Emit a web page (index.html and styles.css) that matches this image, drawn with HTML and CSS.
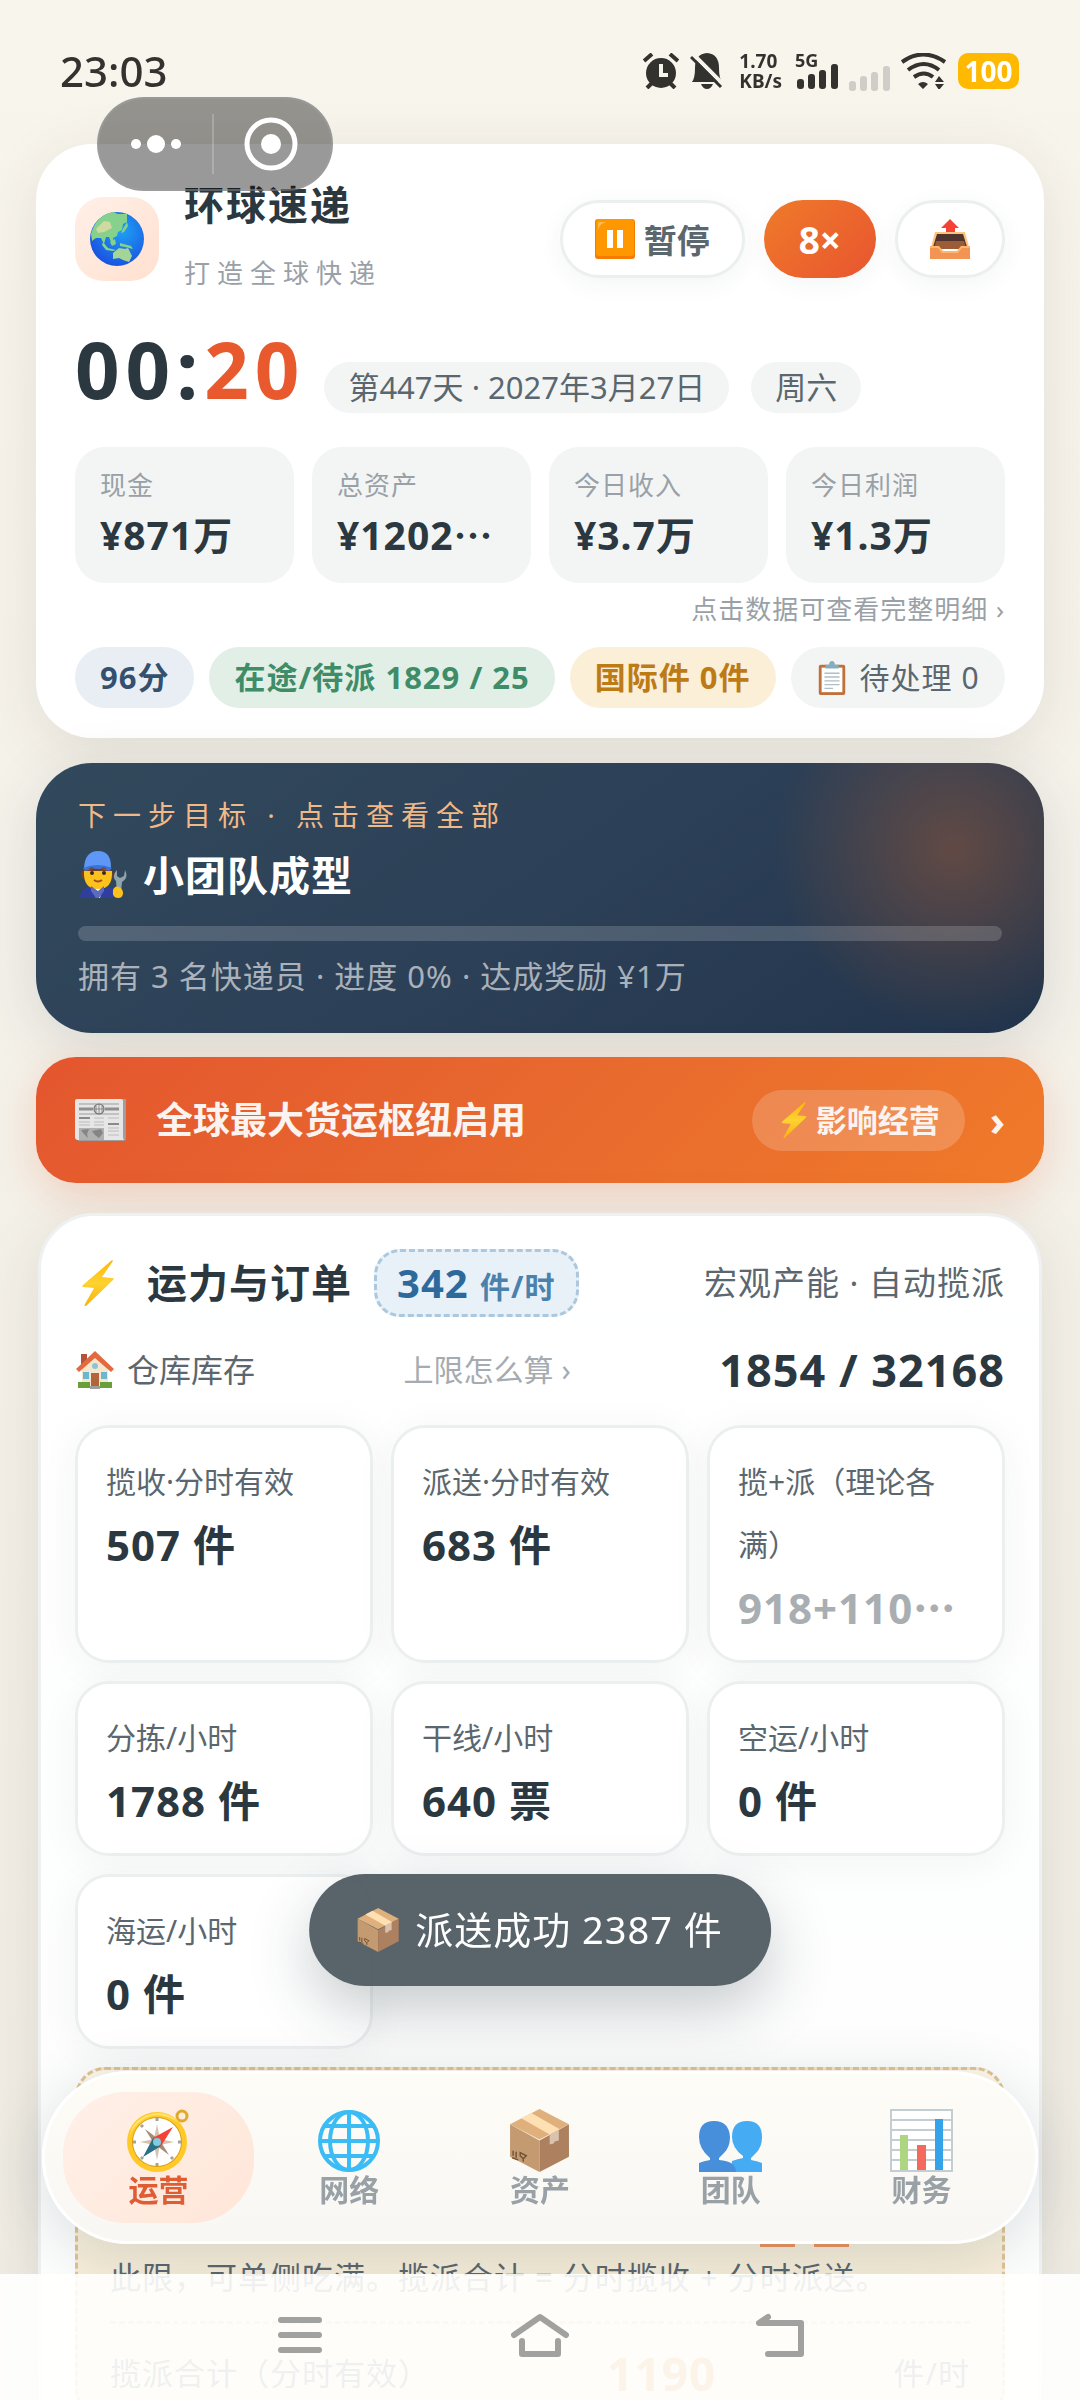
FILE: index.html
```html
<!DOCTYPE html>
<html lang="zh-CN">
<head>
  <meta charset="UTF-8" />
  <meta name="viewport" content="width=device-width, initial-scale=1.0"/>
  <title>环球速递</title>
  <link rel="stylesheet" href="styles.css">
</head>
<body>

  <!-- Icon sprite -->
  <svg class="sprite" aria-hidden="true">
    <defs>
      <radialGradient id="sea" cx="60%" cy="35%" r="70%">
        <stop offset="0" stop-color="#1ea0f5"/><stop offset="1" stop-color="#1a4fe0"/>
      </radialGradient>
      <linearGradient id="bolt" x1="0" y1="0" x2="0" y2="1">
        <stop offset="0" stop-color="#feb804"/><stop offset=".5" stop-color="#fdd231"/><stop offset="1" stop-color="#f9b308"/>
      </linearGradient>
    </defs>
    <symbol id="i-globe" viewBox="0 0 54 54">
      <circle cx="27" cy="27" r="27" fill="url(#sea)"/>
      <path fill="#86d18b" d="M1 22C4 10 12 2 23 0l5 2h9v8l-4 2-1 6-4 2-1 4-4 2 1 5-3-1-2-5-3 0-2 7-3-6-5 0-4 3z"/>
      <path fill="#cfd9a0" d="M6 17l8-8 6 1 2 6-8 4-6 1z"/>
      <path fill="#86d18b" d="M34 15l3-5 1 4-4 6-3 1zM13 30l5 6 8 2-3 1-7-1-4-5zM20 30l5-3 1 5-4 2zM30 31l11 3 2 3-8-2-5-1z"/>
      <path fill="#a5d596" d="M23 41l6-5 6 1 3-1 4 8-3 6-6-2-4-2-6 1z"/>
    </symbol>
    <symbol id="i-pause" viewBox="0 0 40 40">
      <rect width="40" height="40" rx="3" fill="#f57c00"/>
      <rect width="38" height="37" x="1" rx="3" fill="#ff9800"/>
      <path d="M3 11V5q0-2 2-2h6q-6 1-8 8z" fill="#ffbd52"/>
      <path d="M12 11h6v18h-6zM22 11h6v18h-6z" fill="#fff"/>
    </symbol>
    <symbol id="i-outbox" viewBox="0 0 40 40">
      <path d="M20 0l9 9h-4v5h-9V9h-5z" fill="#f44336"/>
      <path d="M5 13h30l4 15H1z" fill="#ffc27d"/>
      <path d="M7 15h26l4 13H3z" fill="#4e342e"/>
      <path d="M6 22h28l2 8H4z" fill="#9c5c35"/>
      <path d="M0 27h9l4 5h14l4-5h9v13H0z" fill="#ffb56b"/>
      <path d="M0 29h8l4 5h16l4-5h8v11H0z" fill="#f29454"/>
    </symbol>
    <symbol id="i-clipboard" viewBox="0 0 32 36">
      <rect x="2" y="4" width="28" height="32" rx="2" fill="#c0703a"/>
      <path d="M5 7h22v26H5z" fill="#fff"/>
      <path d="M9 8V4h4q0-4 3-4t3 4h4v4z" fill="#82aec0"/>
      <path d="M8 13h16M8 17h16M8 21h16M8 25h16M8 29h9" stroke="#b0bec5" stroke-width="1.5"/>
    </symbol>
    <symbol id="i-mechanic" viewBox="0 0 48 48">
      <path d="M4 19q-4 5 1 9l27 1q4-5 0-11z" fill="#7b3f1d"/>
      <path d="M1 47q0-10 12-12h12q14 1 16 12z" fill="#303f9f"/>
      <path d="M14 35h10l-3 12h-4z" fill="#fff"/>
      <path d="M5 20q-1 18 14 18t14-18z" fill="#fcc21b"/>
      <path d="M12 35l7 5 6-5 0 5-5 7h-3l-5-7z" fill="#5c6bc0"/>
      <path d="M5 17Q6 0 19 0t13 16l-2 3q-11-3-24-1z" fill="#5e97f6"/>
      <path d="M4 17q15-6 29 0l-3 3q-12-5-24 0z" fill="#3a72d8"/>
      <circle cx="13" cy="22" r="2" fill="#3e2723"/><circle cx="25" cy="22" r="2" fill="#3e2723"/>
      <path d="M10 18q3-2 5 0M22 18q3-2 5 0" stroke="#6d4c41" stroke-width="1.5" fill="none"/>
      <path d="M15 29q4 3 8 0" stroke="#a24d27" stroke-width="2" fill="none"/>
      <path d="M38 19v6l3 2 4-2 1-6q4 8-3 12l-1 10h-4l-1-11q-5-5 1-11z" fill="#90a4ae"/>
      <path d="M34 39q2-5 6-3 4 2 4 6 0 5-5 5-6 0-5-8z" fill="#fcc21b"/>
    </symbol>
    <symbol id="i-news" viewBox="0 0 52 42">
      <path d="M3 0h48v39q0 3-3 3H3z" fill="#9e9e9e"/>
      <path d="M2 0h44q2 0 2 2v36q0 3 2 3H3q-3 0-3-3V2q0-2 2-2z" fill="#e6e6e6"/>
      <path d="M4 5h40M4 15h40" stroke="#9b9b9b" stroke-width="1"/>
      <path d="M4 10h14M30 10h14" stroke="#8f8f8f" stroke-width="3"/>
      <circle cx="24" cy="10" r="5" fill="none" stroke="#777" stroke-width="1.2"/>
      <path d="M19 10h10M24 5v10M21 7v6M27 7v6" stroke="#777" stroke-width=".8"/>
      <path d="M4 19h11M33 25h11" stroke="#8a8a8a" stroke-width="2"/>
      <path d="M19 19h10M19 23h10M4 23h11M4 26h11M19 26h10M33 19h11M33 29h11M33 32h11M33 36h11" stroke="#bbb" stroke-width="1.2"/>
      <path d="M4 29h25v12H4z" fill="#b0b0b0"/>
      <path d="M6 31l8-1-2 5 1 4-4-4zM17 32l9-2 2 4-4 5-4-3z" fill="#858585"/>
    </symbol>
    <symbol id="i-bolt" viewBox="0 0 34 46">
      <path d="M31 0L2 25q-2 2 1 2l10 1L4 44q-1 3 1 2l27-26q2-2-1-2l-10-1L32 1z" fill="url(#bolt)"/>
    </symbol>
    <symbol id="i-house" viewBox="0 0 38 38">
      <path d="M6 15L19 5l13 10v21H6z" fill="#f5e6cf"/>
      <path d="M5 3h6v10H5z" fill="#b5523a"/>
      <path d="M19 0L0 18l3 3L19 7l16 14 3-3z" fill="#e4693f"/>
      <path d="M15 22h8v13h-8z" fill="#b1653b"/>
      <path d="M7 21h6v7H7zM25 21h6v7h-6z" fill="#6cb7cf"/>
      <circle cx="19" cy="15" r="3" fill="#8fc3d0"/>
      <path d="M2 31h12v6H2zM24 31h12v6H24z" fill="#689f38"/>
      <path d="M14 35h10v3H14z" fill="#9e9e9e"/>
    </symbol>
    <symbol id="i-box" viewBox="0 0 58 62">
      <path d="M0 15l29 16v31L0 47z" fill="#c49a70"/>
      <path d="M58 15L29 31v31l29-15z" fill="#ad8060"/>
      <path d="M29 0L0 15l29 15 29-15z" fill="#dfb07c"/>
      <path d="M21 4L11 9l28 16 10-5z" fill="#ffe0b2"/>
      <path d="M39 25l9-5v11l-4 1-1 2-4 1z" fill="#d9c3ae"/>
      <path d="M3 41v5M6 42v6M2 48l6 2M10 43l6 3-3 3-3-3zM13 49v3" stroke="#6f5238" stroke-width="1.4" fill="none"/>
    </symbol>
    <symbol id="i-compass" viewBox="0 0 63 63">
      <circle cx="55" cy="7" r="5" fill="none" stroke="#e0a92a" stroke-width="3"/>
      <circle cx="30" cy="33" r="30" fill="#ffca28"/>
      <path d="M2 31Q4 7 30 4q14 0 21 9-20-12-34-3T2 31z" fill="#ffe36c"/>
      <circle cx="30" cy="33" r="25" fill="#d99f16"/>
      <circle cx="30" cy="33" r="24" fill="#fff"/>
      <path d="M30 15l3 15 14 3-14 3-3 15-3-15-14-3 14-3z" fill="#d8c2ae"/>
      <path d="M18 20l12 9 4 4 8 13-12-9-4-4z" fill="#a68a76"/>
      <path d="M46 18L34 37l-8-8z" fill="#f44336"/>
      <path d="M16 48l10-19 8 8z" fill="#2a6f86"/>
      <circle cx="30" cy="33" r="4" fill="#80cbdc"/>
      <path d="M30 9v3M30 54v3M6 33h3M51 33h3M14 16l2 2M44 48l2 2M14 50l2-2" stroke="#a9a09a" stroke-width="3"/>
    </symbol>
    <symbol id="i-web" viewBox="0 0 63 63">
      <g fill="none" stroke="#3bbcf5" stroke-width="4">
        <circle cx="31" cy="32" r="29"/>
        <ellipse cx="31" cy="32" rx="19" ry="29"/>
        <path d="M31 3v58M2 32h58M7 17h48M7 47h48"/>
      </g>
    </symbol>
    <symbol id="i-team" viewBox="0 0 63 63">
      <path d="M33 28q0-16 15-16t15 16q0 10-6 16-3 3-5 5v2q6 1 11 3v9H32l1-11q6-2 11-3v-2q-11-8-11-19z" fill="#45abf3"/>
      <path d="M0 28q0-16 15-16t16 16q0 10-6 16-3 3-5 5v2q17 1 17 12H0v-9q5-2 11-3v-2Q0 40 0 28z" fill="#478fdb"/>
    </symbol>
    <symbol id="i-chart" viewBox="0 0 63 63">
      <path d="M1 1h61v61H1z" fill="#fff" stroke="#c3cdd2" stroke-width="2"/>
      <path d="M1 11h61M1 21h61M1 31h61M1 41h61M1 51h61" stroke="#c3cdd2" stroke-width="2"/>
      <path d="M10 26h8v35h-8z" fill="#aed581"/>
      <path d="M27 36h9v25h-9z" fill="#f5695d"/>
      <path d="M45 10h8v51h-8z" fill="#34a3ea"/>
    </symbol>
  </svg>

  <!-- Phone status bar -->
  <div class="status-bar">
    <span class="status-time">23:03</span>
    <div class="status-icons">
      <svg width="36" height="36" viewBox="0 0 36 36" fill="#33322f">
        <circle cx="18" cy="20" r="15"/>
        <path d="M1 8l8-7M35 8l-8-7M4 35l6-6M32 35l-6-6" stroke="#33322f" stroke-width="4"/>
        <path d="M18 11v11h7" fill="none" stroke="#f7f4ec" stroke-width="4"/>
      </svg>
      <svg width="34" height="36" viewBox="0 0 34 36">
        <path d="M2 29q3-4 3-14Q5 1 17 0q12 1 12 15 0 10 3 14zM11 31h12q-2 5-6 5t-6-5z" fill="#33322f"/>
        <path d="M3 1l31 31" stroke="#f7f4ec" stroke-width="4"/>
        <path d="M1 4l30 30" stroke="#33322f" stroke-width="3"/>
      </svg>
      <div class="net-speed"><span>1.70</span><span>KB/s</span></div>
      <div class="signal-5g">
        <span>5G</span>
        <svg width="41" height="25" viewBox="0 0 41 25" fill="#33322f">
          <rect y="15" width="7" height="10" rx="3"/><rect x="11" y="10" width="7" height="15" rx="3"/><rect x="22" y="6" width="7" height="19" rx="3"/><rect x="34" width="7" height="25" rx="3"/>
        </svg>
      </div>
      <svg class="signal-off" width="41" height="25" viewBox="0 0 41 25" fill="#d0cdc8">
        <rect y="15" width="7" height="10" rx="3"/><rect x="11" y="10" width="7" height="15" rx="3"/><rect x="22" y="6" width="7" height="19" rx="3"/><rect x="34" width="7" height="25" rx="3"/>
      </svg>
      <svg width="46" height="36" viewBox="0 0 46 36" fill="none" stroke="#33322f" stroke-width="4">
        <path d="M1 9q21-15 43 0M7 17q16-12 31 0M13 24q10-7 19 0"/>
        <path d="M17 31q5-4 10 0l-5 5zM34 29l4-6 5 6zM34 31l4 6 5-6z" fill="#33322f" stroke="none"/>
      </svg>
      <span class="battery">100</span>
    </div>
  </div>

  <!-- Mini program capsule -->
  <div class="capsule">
    <button class="capsule-button" aria-label="更多">
      <svg width="50" height="20" viewBox="0 0 50 20" fill="#fff"><circle cx="5" cy="10" r="5"/><circle cx="25" cy="10" r="9"/><circle cx="45" cy="10" r="5"/></svg>
    </button>
    <button class="capsule-button" aria-label="关闭">
      <svg width="54" height="54" viewBox="0 0 54 54"><circle cx="27" cy="27" r="24" fill="none" stroke="#fff" stroke-width="5"/><circle cx="27" cy="27" r="10" fill="#fff"/></svg>
    </button>
  </div>

  <main class="app">

    <!-- Header card -->
    <section class="header-card">
      <div class="brand-row">
        <div class="logo"><svg width="54" height="54"><use href="#i-globe"/></svg></div>
        <div class="brand">
          <h1>环球速递</h1>
          <p>打造全球快递</p>
        </div>
        <div class="controls">
          <button class="control"><svg width="40" height="40"><use href="#i-pause"/></svg>暂停</button>
          <button class="control speed">8×</button>
          <button class="control" aria-label="导出"><svg width="40" height="40"><use href="#i-outbox"/></svg></button>
        </div>
      </div>

      <div class="time-row">
        <div class="clock">00:<span>20</span></div>
        <span class="date-pill">第447天 · 2027年3月27日</span>
        <span class="date-pill">周六</span>
      </div>

      <div class="stats">
        <div class="stat"><span>现金</span><strong>¥871万</strong></div>
        <div class="stat"><span>总资产</span><strong>¥1202<span class="dots">…</span></strong></div>
        <div class="stat"><span>今日收入</span><strong>¥3.7万</strong></div>
        <div class="stat"><span>今日利润</span><strong>¥1.3万</strong></div>
      </div>
      <a class="stats-hint" href="#">点击数据可查看完整明细 ›</a>

      <div class="chips">
        <span class="chip blue">96分</span>
        <span class="chip green">在途/待派 1829 / 25</span>
        <span class="chip yellow">国际件 0件</span>
        <span class="chip grey"><svg width="32" height="34"><use href="#i-clipboard"/></svg>待处理 0</span>
      </div>
    </section>

    <!-- Next goal -->
    <section class="goal-card">
      <p class="goal-label">下一步目标 · 点击查看全部</p>
      <h2><svg width="50" height="48"><use href="#i-mechanic"/></svg>小团队成型</h2>
      <div class="goal-bar"></div>
      <p class="goal-info">拥有 3 名快递员 · 进度 0% · 达成奖励 ¥1万</p>
    </section>

    <!-- News -->
    <a class="news" href="#">
      <svg width="52" height="42"><use href="#i-news"/></svg>
      <span class="news-title">全球最大货运枢纽启用</span>
      <span class="news-tag"><svg width="34" height="36"><use href="#i-bolt"/></svg>影响经营</span>
      <span class="news-arrow">›</span>
    </a>

    <!-- Capacity -->
    <section class="panel">
      <div class="panel-head">
        <svg width="46" height="46"><use href="#i-bolt"/></svg>
        <h2>运力与订单</h2>
        <span class="rate">342 <small>件/时</small></span>
        <span class="panel-note">宏观产能 · 自动揽派</span>
      </div>
      <div class="stock">
        <span class="stock-name"><svg width="40" height="38"><use href="#i-house"/></svg>仓库库存</span>
        <a href="#">上限怎么算 ›</a>
        <strong>1854 / 32168</strong>
      </div>

      <div class="metrics">
        <div class="metric"><span>揽收·分时有效</span><strong>507 件</strong></div>
        <div class="metric"><span>派送·分时有效</span><strong>683 件</strong></div>
        <div class="metric muted"><span>揽+派（理论各满）</span><strong>918+110<b class="dots">…</b></strong></div>
        <div class="metric"><span>分拣/小时</span><strong>1788 件</strong></div>
        <div class="metric"><span>干线/小时</span><strong>640 票</strong></div>
        <div class="metric"><span>空运/小时</span><strong>0 件</strong></div>
        <div class="metric"><span>海运/小时</span><strong>0 件</strong></div>
      </div>

      <div class="notice">
        <div class="notice-marks"><i></i><i></i></div>
        <p>此限，可单侧吃满。揽派合计 = 分时揽收 + 分时派送。</p>
        <div class="total">
          <span>揽派合计（分时有效）</span>
          <strong>1190</strong>
          <span>件/时</span>
        </div>
      </div>
    </section>
  </main>

  <div class="toast"><svg width="42" height="44"><use href="#i-box"/></svg>派送成功 2387 件</div>

  <!-- Bottom tabs -->
  <nav class="tabs">
    <a class="tab active" href="#"><svg width="63" height="63"><use href="#i-compass"/></svg>运营</a>
    <a class="tab" href="#"><svg width="63" height="63"><use href="#i-web"/></svg>网络</a>
    <a class="tab" href="#"><svg width="63" height="63"><use href="#i-box"/></svg>资产</a>
    <a class="tab" href="#"><svg width="63" height="63"><use href="#i-team"/></svg>团队</a>
    <a class="tab" href="#"><svg width="63" height="63"><use href="#i-chart"/></svg>财务</a>
  </nav>

  <!-- Phone navigation -->
  <div class="system-nav">
    <button aria-label="最近任务"><svg width="46" height="36" viewBox="0 0 46 36" stroke="#a1a1a0" stroke-width="6" stroke-linecap="round"><path d="M4 3h38M4 18h38M4 33h38"/></svg></button>
    <button aria-label="主屏幕"><svg width="58" height="44" viewBox="0 0 58 44" fill="none" stroke="#a1a1a0" stroke-width="6" stroke-linecap="round" stroke-linejoin="round"><path d="M3 22L29 4l26 18M11 28v13h36V28"/></svg></button>
    <button aria-label="返回"><svg width="50" height="44" viewBox="0 0 50 44" fill="none" stroke="#a1a1a0" stroke-width="6" stroke-linecap="round" stroke-linejoin="round"><path d="M13 4L4 10h42v31H13"/></svg></button>
  </div>

</body>
</html>
```
FILE: styles.css
```css
* {
  box-sizing: border-box;
}

body {
  margin: 0;
  height: 100vh;
  overflow: hidden;
  font-family: "Noto Sans", "Noto Sans CJK SC", sans-serif;
  line-height: 1.4;
  color: #2b3840;
  background: linear-gradient(#f8f5ed, #efece4);
}

h1, h2, p {
  margin: 0;
}

a {
  text-decoration: none;
}

button {
  border: none;
  background: none;
  padding: 0;
  font-family: inherit;
}

svg {
  flex-shrink: 0;
}

.sprite {
  position: absolute;
  width: 0;
  height: 0;
}

/* status bar */
.status-bar {
  position: fixed;
  top: 0;
  left: 0;
  right: 0;
  display: flex;
  justify-content: space-between;
  align-items: center;
  height: 142px;
  padding: 0 61px 0 60px;
  color: #33322f;
}

.status-time {
  font-size: 42px;
  font-weight: 500;
}

.status-icons {
  display: flex;
  align-items: center;
  gap: 11px;
}

.net-speed {
  display: flex;
  flex-direction: column;
  margin: 0 4px;
  font-size: 19px;
  font-weight: 700;
  line-height: 20px;
}

.signal-5g {
  position: relative;
  display: flex;
  align-items: flex-end;
  height: 36px;
}

.signal-5g span {
  position: absolute;
  top: 0;
  left: -2px;
  font-size: 18px;
  font-weight: 700;
  line-height: 14px;
}

.signal-off {
  align-self: flex-end;
}

.battery {
  width: 61px;
  border-radius: 10px;
  background: #ffb900;
  color: white;
  font-size: 28px;
  font-weight: 700;
  line-height: 36px;
  text-align: center;
}

/* capsule */
.capsule {
  position: fixed;
  top: 97px;
  left: 97px;
  z-index: 2;
  display: flex;
  align-items: center;
  width: 236px;
  height: 94px;
  padding-right: 4px;
  border: 2px solid rgba(160, 160, 160, 0.5);
  border-radius: 47px;
  background: rgba(0, 0, 0, 0.4);
}

.capsule-button {
  flex: 1;
  display: flex;
  justify-content: center;
  align-items: center;
  height: 60px;
}

.capsule-button + .capsule-button {
  border-left: 2px solid rgba(255, 255, 255, 0.2);
}

.app {
  padding: 144px 36px 0;
}

/* header card */
.header-card {
  padding: 27px 39px 30px;
  border-radius: 56px;
  background: white;
  box-shadow: 0 12px 60px rgba(60, 50, 30, 0.1);
}

.brand-row {
  display: flex;
  align-items: center;
}

.logo {
  display: flex;
  justify-content: center;
  align-items: center;
  width: 84px;
  height: 84px;
  border-radius: 28px;
  background: linear-gradient(135deg, #fff0e8, #ffe0cf);
}

.brand {
  margin-left: 25px;
  line-height: 68px;
}

.brand h1 {
  font-size: 40px;
  letter-spacing: 2px;
}

.brand p {
  color: #99a1a7;
  font-size: 26px;
  letter-spacing: 7px;
}

.controls {
  display: flex;
  gap: 19px;
  margin-left: auto;
}

.control {
  display: flex;
  align-items: center;
  gap: 9px;
  height: 78px;
  padding: 0 32px;
  border: 3px solid #ecefef;
  border-radius: 39px;
  background: white;
  box-shadow: 0 6px 24px rgba(40, 56, 64, 0.05);
  color: #5b676e;
  font-size: 33px;
  font-weight: 700;
}

.control.speed {
  padding: 0 35px;
  border: none;
  background: linear-gradient(135deg, #ef7a2a, #e8552f);
  color: white;
  font-size: 37px;
}

.time-row {
  display: flex;
  align-items: baseline;
  margin-top: 12px;
}

.clock {
  margin-right: 19px;
  font-size: 78px;
  font-weight: 700;
  line-height: 100px;
  letter-spacing: 6px;
}

.clock span {
  color: #e85a2e;
}

.date-pill {
  margin-right: 22px;
  padding: 0 24px;
  border-radius: 26px;
  background: #f3f5f5;
  color: #5b676e;
  font-size: 31px;
  line-height: 51px;
}

.stats {
  display: grid;
  grid-template-columns: repeat(4, 1fr);
  gap: 18px;
  margin-top: 28px;
}

.stat {
  display: flex;
  flex-direction: column;
  height: 136px;
  padding: 12px 25px;
  border-radius: 30px;
  background: #f3f5f5;
}

.stat > span {
  color: #99a1a7;
  font-size: 26px;
  line-height: 52px;
  letter-spacing: 1px;
}

.stat strong {
  font-size: 39px;
  line-height: 48px;
  letter-spacing: 1px;
}

/* centred ellipsis comes from the CJK face */
.dots {
  font-family: "Noto Sans CJK SC", sans-serif;
  line-height: 1;
}

.stats-hint {
  display: block;
  color: #99a1a7;
  font-size: 26px;
  line-height: 52px;
  letter-spacing: 1px;
  text-align: right;
}

.chips {
  display: flex;
  gap: 15px;
  margin-top: 12px;
}

.chip {
  display: flex;
  align-items: center;
  gap: 12px;
  padding: 0 25px;
  border-radius: 31px;
  font-size: 31px;
  font-weight: 700;
  line-height: 61px;
  letter-spacing: 1px;
  white-space: nowrap;
}

.chip.blue {
  background: #e9eef4;
  color: #34506e;
}

.chip.green {
  background: #e1efe6;
  color: #3f8c68;
}

.chip.yellow {
  background: #fbefd8;
  color: #bd7b16;
}

.chip.grey {
  background: #f3f5f5;
  color: #5b676e;
  font-size: 30px;
  font-weight: 400;
}

/* goal */
.goal-card {
  margin-top: 25px;
  padding: 26px 42px 32px;
  border-radius: 56px;
  background:
    radial-gradient(circle at 918px 86px, rgba(232, 110, 40, 0.3), rgba(232, 110, 40, 0) 180px),
    linear-gradient(145deg, #32495c, #2c4057 50%, #22344b);
  box-shadow: 0 12px 60px rgba(40, 56, 64, 0.14);
  color: white;
}

.goal-label {
  color: #f0b987;
  font-size: 28px;
  line-height: 52px;
  letter-spacing: 7px;
}

.goal-card h2 {
  display: flex;
  align-items: center;
  gap: 15px;
  font-size: 41px;
  line-height: 68px;
  letter-spacing: 1px;
}

.goal-bar {
  height: 15px;
  margin-top: 17px;
  border-radius: 8px;
  background: rgba(255, 255, 255, 0.17);
}

.goal-info {
  margin-top: 10px;
  color: rgba(255, 255, 255, 0.6);
  font-size: 31px;
  line-height: 50px;
  letter-spacing: 1px;
}

/* news */
.news {
  display: flex;
  align-items: center;
  height: 126px;
  margin-top: 24px;
  padding: 0 39px;
  border-radius: 40px;
  background: linear-gradient(135deg, #e4562e, #e8692e 50%, #f07a2a);
  box-shadow: 0 12px 40px rgba(232, 90, 46, 0.22);
  color: #fbf3ef;
  font-weight: 700;
}

.news-title {
  margin-left: 29px;
  font-size: 37px;
}

.news-tag {
  display: flex;
  align-items: center;
  gap: 5px;
  margin-left: auto;
  padding: 0 25px;
  border-radius: 31px;
  background: rgba(255, 255, 255, 0.18);
  font-size: 31px;
  line-height: 61px;
}

.news-arrow {
  margin-left: 25px;
  font-size: 42px;
}

/* capacity panel */
.panel {
  margin: 30px 2px 0;
  padding: 33px 34px;
  border: 3px solid #eef0f1;
  border-radius: 56px;
  background: linear-gradient(white, #fcfdfd);
  box-shadow: 0 12px 60px rgba(60, 50, 30, 0.1);
}

.panel-head {
  display: flex;
  align-items: center;
}

.panel-head h2 {
  margin: 0 22px 0 26px;
  font-size: 40px;
  letter-spacing: 1px;
}

.rate {
  padding: 0 20px;
  border: 3px dashed #abc8de;
  border-radius: 26px;
  background: #e9f1f8;
  color: #2c6a9b;
  font-size: 40px;
  font-weight: 700;
  line-height: 62px;
  letter-spacing: 1px;
}

.rate small {
  color: #4a82ad;
  font-size: 30px;
  line-height: 1;
}

.panel-note {
  margin-left: auto;
  color: #5b676e;
  font-size: 33px;
  letter-spacing: 1px;
}

.stock {
  display: flex;
  justify-content: space-between;
  align-items: center;
  margin-top: 20px;
  line-height: 66px;
}

.stock-name {
  display: flex;
  align-items: center;
  gap: 12px;
  color: #5b676e;
  font-size: 32px;
}

.stock a {
  color: #a5abb0;
  font-size: 30px;
}

.stock strong {
  font-size: 45px;
  letter-spacing: 1px;
}

.metrics {
  display: grid;
  grid-template-columns: repeat(3, 1fr);
  gap: 18px;
  margin-top: 22px;
}

.metric {
  padding: 22px 28px 21px;
  border: 3px solid #eceff0;
  border-radius: 34px;
  background: white;
  box-shadow: 0 6px 40px rgba(40, 56, 64, 0.05);
  line-height: 63px;
}

.metric > span {
  display: block;
  color: #5b676e;
  font-size: 30px;
}

.metric strong {
  display: block;
  height: 63px;
  font-size: 42px;
  letter-spacing: 1px;
}

.metric.muted strong {
  color: #a9aeb3;
}

.notice {
  margin-top: 18px;
  padding: 142px 32px 20px;
  border: 3px dashed #dfc393;
  border-radius: 30px;
  background: linear-gradient(#fdf8ec, #f2e6cc);
  color: #5b676e;
  font-size: 31px;
  letter-spacing: 1px;
}

.notice-marks {
  display: flex;
  justify-content: flex-end;
  gap: 19px;
  padding-right: 121px;
}

.notice-marks i {
  width: 35px;
  height: 35px;
  background: #ec9560;
}

.notice p {
  padding-bottom: 14px;
  border-bottom: 3px dashed #dfc393;
  line-height: 60px;
}

.total {
  display: flex;
  justify-content: space-between;
  align-items: center;
  margin-top: 26px;
  line-height: 46px;
}

.total strong {
  color: #d9822b;
  font-size: 46px;
}

/* floating things */
.toast {
  position: fixed;
  left: 50%;
  bottom: 414px;
  display: flex;
  align-items: center;
  gap: 16px;
  height: 112px;
  padding: 0 48px;
  border-radius: 56px;
  background: rgba(74, 86, 93, 0.92);
  box-shadow: 0 24px 60px rgba(40, 56, 64, 0.25);
  color: white;
  font-size: 38px;
  letter-spacing: 1px;
  white-space: nowrap;
  transform: translateX(-50%);
}

.tabs {
  position: fixed;
  left: 42px;
  right: 42px;
  bottom: 156px;
  display: flex;
  padding: 18px;
  border: 3px solid white;
  border-radius: 86px;
  background: linear-gradient(#fdfcf7, #f9f7f3);
  box-shadow: 0 12px 60px rgba(40, 56, 64, 0.16);
}

.tab {
  flex: 1;
  display: flex;
  flex-direction: column;
  align-items: center;
  height: 131px;
  padding-top: 17px;
  border-radius: 62px;
  color: #99a1a7;
  font-size: 30px;
  font-weight: 700;
  line-height: 36px;
}

.tab.active {
  background: linear-gradient(135deg, #fff0e8, #ffe6d8);
  color: #e05c33;
}

.system-nav {
  position: fixed;
  left: 0;
  right: 0;
  bottom: 0;
  display: flex;
  justify-content: center;
  gap: 180px;
  height: 126px;
  background: rgba(255, 255, 254, 0.9);
}

.system-nav button {
  width: 60px;
}
```
